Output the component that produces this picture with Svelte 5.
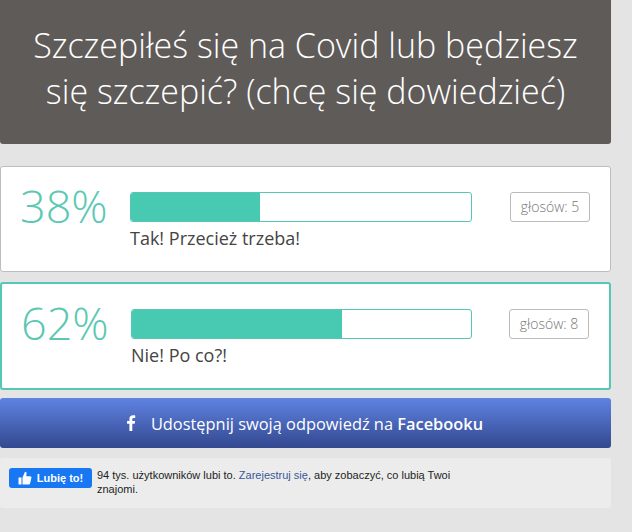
<script>
  const opts = [
    { pct: 38, label: 'Tak! Przecież trzeba!', votes: 5, sel: false },
    { pct: 62, label: 'Nie! Po co?!', votes: 8, sel: true }
  ];
</script>

<div class="page">
  <div class="title">Szczepiłeś się na Covid lub będziesz się szczepić? (chcę się dowiedzieć)</div>
  {#each opts as o}
    <div class="opt" class:sel={o.sel}>
      <div class="pct">{o.pct}%</div>
      <div class="mid">
        <div class="bar"><div class="fill" style="width:{o.pct}%"></div></div>
        <div class="label">{o.label}</div>
      </div>
      <div class="votes">głosów: {o.votes}</div>
    </div>
  {/each}
  <div class="fb">
    <svg width="12" height="18" viewBox="0 0 12 18"><path fill="#fff" d="M3.400 17V9.800H1V7h2.400V5c0-2.400 1.400-3.700 3.600-3.700 1 0 1.900.1 2.200.1v2.500H7.700c-1.200 0-1.400.6-1.400 1.400V7h2.800l-.4 2.800H6.300V17z"/></svg>
    <span>Udostępnij swoją odpowiedź na <b>Facebooku</b></span>
  </div>
  <div class="like">
    <div class="likebtn">
      <svg width="14" height="14" viewBox="0 0 14 14"><path fill="#fff" d="M.5 6.500h3V13.500h-3zM4.500 6.500 7 .8c1.100 0 1.800.8 1.600 1.900L8.200 5.200h4c.9 0 1.400.8 1.200 1.500l-1.300 5.800c-.2.600-.6 1-1.200 1H4.500z"/></svg>
      <span>Lubię to!</span>
    </div>
    <div class="liketext">94 tys. użytkowników lubi to. <a href="#x">Zarejestruj się</a>, aby zobaczyć, co lubią Twoi znajomi.</div>
  </div>
</div>

<style>
  :global(body) { margin: 0; background: #e4e4e4; }
  .page { width: 611px; height: 532px; font-family: "Open Sans", sans-serif; overflow: hidden; }
  .title { background: #5f5b59; color: #fff; height: 144px; box-sizing: border-box; border-radius: 0 0 3px 3px; padding: 22px 20px 0; font-size: 34px; line-height: 46px; font-weight: 300; text-align: center; }
  .opt { background: #fff; border: 1px solid #bdbdbd; border-radius: 3px; height: 106px; box-sizing: border-box; margin-top: 22px; display: flex; padding: 0 20px 0 19px; align-items: flex-start; }
  .opt.sel { border: 2px solid #55c8b3; height: 108px; margin-top: 10px; }
  .pct { width: 110px; flex: none; font-size: 45px; font-weight: 300; color: #5bc8b2; line-height: 60px; margin-top: 9px; }
  .mid { flex: none; width: 342px; margin-top: 25px; }
  .sel .mid { width: 341px; }
  .bar { height: 30px; border: 1px solid #55c8b3; border-radius: 3px; box-sizing: border-box; background: #fff; overflow: hidden; }
  .fill { height: 100%; background: #48cab2; }
  .label { font-size: 18px; line-height: 24px; color: #444; margin-top: 4px; }
  .votes { margin-left: auto; margin-top: 25px; width: 80px; height: 30px; box-sizing: border-box; border: 1px solid #bbb; border-radius: 3px; text-align: center; font-size: 14px; font-weight: 300; line-height: 28px; color: #777; }
  .fb { margin-top: 8px; height: 50px; border-radius: 3px; background: linear-gradient(#5f83e2, #33488f); color: #fff; display: flex; align-items: center; justify-content: center; gap: 13px; font-size: 16.4px; padding-right: 2px; }
  .fb b { font-weight: 600; }
  .like { margin-top: 10px; height: 50px; background: #ececec; border-radius: 3px; display: flex; padding: 10px 9px 0; box-sizing: border-box; gap: 5px; }
  .likebtn { background: #1877f2; color: #fff; width: 83px; height: 20px; border-radius: 3px; display: flex; align-items: center; justify-content: center; gap: 5px; font: bold 11px "Liberation Sans", sans-serif; flex: none; }
  .liketext { font: 11px/14px "Liberation Sans", sans-serif; color: #1c1e21; width: 370px; }
  .liketext a { color: #385898; text-decoration: none; }
</style>
